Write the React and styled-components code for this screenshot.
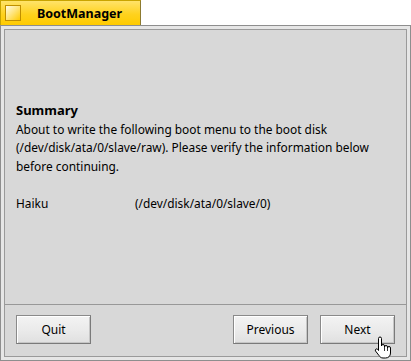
import React from "react";
import styled, { createGlobalStyle } from "styled-components";

const Global = createGlobalStyle`
  html, body { margin: 0; padding: 0; background: #ffffff; }
  body { font-family: "Noto Sans", "DejaVu Sans", sans-serif; }
`;

const Page = styled.div`
  width: 411px;
  height: 361px;
  position: relative;
  display: flex;
  flex-direction: column;
`;

const Tab = styled.div`
  width: 141px;
  height: 25px;
  box-sizing: border-box;
  border: 1px solid #c9a400;
  border-bottom: none;
  border-right-color: #8c7a30;
  background: linear-gradient(180deg, #ffe36a 0%, #ffd21e 55%, #ffcb00 100%);
  display: flex;
  align-items: center;
  padding-left: 4px;
`;

const CloseBox = styled.div`
  width: 16px;
  height: 16px;
  box-sizing: border-box;
  border: 1px solid #c08f00;
  background: linear-gradient(135deg, #fffbe6 0%, #ffe47a 50%, #ffcb00 100%);
`;

const Title = styled.div`
  flex: 1;
  text-align: center;
  font-weight: 700;
  font-size: 12.5px;
  color: #000;
  padding-right: 2px;
  margin-top: 1px;
`;

const Frame = styled.div`
  flex: 1;
  box-sizing: border-box;
  border: 1px solid #8e8e8e;
  background: #e6e6e6;
  padding: 3px;
  display: flex;
`;

const Content = styled.div`
  flex: 1;
  box-sizing: border-box;
  border: 1px solid #9a9a9a;
  background: #d8d8d8;
  display: flex;
  flex-direction: column;
`;

const Body = styled.div`
  flex: 1;
  padding: 71px 12px 0 11px;
  color: #000;
  font-size: 11.9px;
  line-height: 18.6px;
`;

const Heading = styled.div`
  font-weight: 700;
  font-size: 13px;
`;

const Para = styled.p`
  margin: 0 0 18.6px 0;
`;

const Entry = styled.div`
  display: grid;
  grid-template-columns: 119px auto;
`;

const ButtonBar = styled.div`
  border-top: 1px solid #989898;
  height: 52px;
  box-sizing: border-box;
  display: flex;
  align-items: center;
  padding: 0 11px 0 11px;
  gap: 12px;
`;

const Spacer = styled.div`
  flex: 1;
`;

const Button = styled.button`
  width: 75px;
  height: 29px;
  box-sizing: border-box;
  border: 1px solid #8a8a8a;
  border-right-color: #7a7a7a;
  border-bottom-color: #7a7a7a;
  box-shadow: inset 1px 1px 0 #ffffff, inset -1px -1px 0 #c6c6c6;
  background: linear-gradient(180deg, #f3f3f3 0%, #ebebeb 50%, #e0e0e0 100%);
  font-family: "Noto Sans", "DejaVu Sans", sans-serif;
  font-size: 12px;
  color: #000;
  padding: 0;
  margin-top: -3px;
`;

const Cursor = styled.svg`
  position: absolute;
  left: 374px;
  top: 336px;
  width: 20px;
  height: 23px;
`;

export default function App() {
  return (
    <>
      <Global />
      <Page>
        <Tab>
          <CloseBox />
          <Title>BootManager</Title>
        </Tab>
        <Frame>
          <Content>
            <Body>
              <Heading>Summary</Heading>
              <Para>
                About to write the following boot menu to the boot disk
                <br />
                (/dev/disk/ata/0/slave/raw). Please verify the information below
                <br />
                before continuing.
              </Para>
              <Entry>
                <span>Haiku</span>
                <span>(/dev/disk/ata/0/slave/0)</span>
              </Entry>
            </Body>
            <ButtonBar>
              <Button>Quit</Button>
              <Spacer />
              <Button>Previous</Button>
              <Button>Next</Button>
            </ButtonBar>
          </Content>
        </Frame>
        <Cursor viewBox="0 0 20 23">
          <path
            d="M4.5 2.5 a1.5 1.5 0 0 1 3 0 V10 a1.5 1.5 0 0 1 3 0 V11 a1.5 1.5 0 0 1 3 0 V12 a1.5 1.5 0 0 1 3 0 V17 c0 3 -2 5 -5 5 H9 c-2 0 -3 -1 -4 -2.5 L1.5 15 a1.4 1.4 0 0 1 2.2 -1.7 L4.5 14.5 Z"
            fill="#ffffff"
            stroke="#000"
            strokeWidth="1"
            strokeLinejoin="round"
          />
          <path d="M10.5 11 V15 M13.5 12 V15" stroke="#000" strokeWidth="0.8" fill="none" />
        </Cursor>
      </Page>
    </>
  );
}
